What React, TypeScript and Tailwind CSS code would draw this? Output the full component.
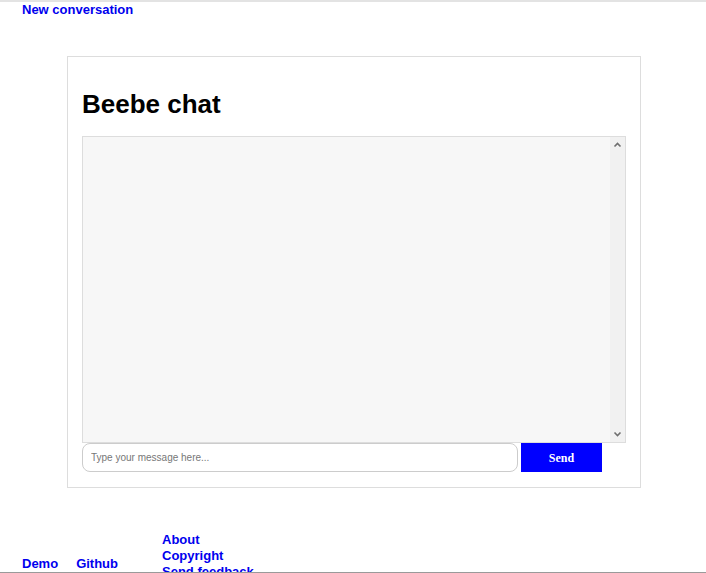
import React from "react";

function ScrollArrow({ dir }: { dir: "up" | "down" }) {
  return (
    <svg width="15" height="14" viewBox="0 0 15 14" className="block">
      <path
        d={dir === "up" ? "M4.5 8.5 L7.5 5.5 L10.5 8.5" : "M4.5 5.5 L7.5 8.5 L10.5 5.5"}
        fill="none"
        stroke="#6e6e6e"
        strokeWidth="1.6"
      />
    </svg>
  );
}

export default function App() {
  const linkCls = "text-[#0000ee] font-bold text-[13px] leading-[16px] no-underline";
  return (
    <div
      className="h-[573px] w-[706px] overflow-hidden bg-white border-t-2 border-[#e3e3e3] border-b border-b-[#9a9a9a] text-[13px] leading-[16px]"
      style={{ fontFamily: '"Liberation Sans", Arial, sans-serif' }}
    >
      <div className="pl-[22px] leading-[16px]">
        <a href="#" className={linkCls}>New conversation</a>
      </div>

      <div className="ml-[67px] mt-[38px] w-[574px] border border-[#dddddd] pt-[32px] pl-[14px] pr-[14px] pb-[15px]">
        <h1 className="text-[26px] leading-[30px] font-bold text-black mb-[17px]">Beebe chat</h1>
        <div className="h-[307px] w-full border border-[#dddddd] bg-[#f7f7f7] flex">
          <div className="flex-1"></div>
          <div className="w-[15px] bg-[#f1f1f1] flex flex-col justify-between py-[1px]">
            <ScrollArrow dir="up" />
            <ScrollArrow dir="down" />
          </div>
        </div>
        <div className="flex items-stretch gap-[3px]">
          <input
            type="text"
            placeholder="Type your message here..."
            className="w-[436px] h-[29px] rounded-lg border border-[#cccccc] bg-white pl-[8px] text-[10px] text-black placeholder:text-[#777777] outline-none"
            style={{ fontFamily: '"Liberation Sans", Arial, sans-serif' }}
          />
          <button
            className="w-[81px] h-[29px] bg-[#0000ff] text-white font-bold text-[12px]"
            style={{ fontFamily: '"Liberation Serif", "Times New Roman", serif' }}
          >
            Send
          </button>
        </div>
      </div>

      <div className="flex items-start mt-[44px]">
        <a href="#" className={`${linkCls} ml-[22px] mt-[24px]`}>Demo</a>
        <a href="#" className={`${linkCls} ml-[18px] mt-[24px]`}>Github</a>
        <div className="flex flex-col ml-[44px]">
          <a href="#" className={linkCls}>About</a>
          <a href="#" className={linkCls}>Copyright</a>
          <a href="#" className={linkCls}>Send feedback</a>
        </div>
      </div>
    </div>
  );
}
